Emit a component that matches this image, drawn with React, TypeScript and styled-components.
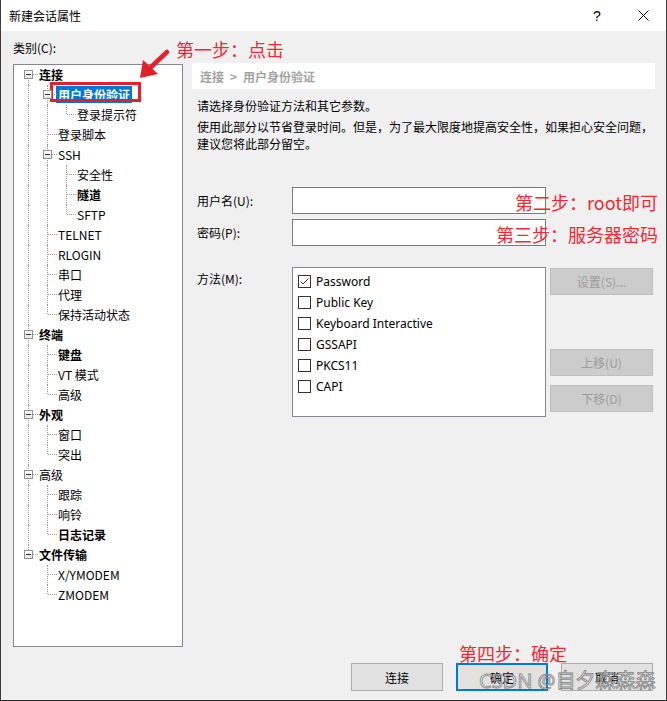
import * as React from "react";
import styled, { createGlobalStyle } from "styled-components";

const GlobalStyle = createGlobalStyle`
  html, body {
    margin: 0;
    padding: 0;
    background: #ffffff;
  }
  body {
    font-family: "Noto Sans", "Noto Sans CJK SC", sans-serif;
    font-size: 12px;
    color: #000;
  }
  * { box-sizing: border-box; }
`;

const RED = "#ee2a35";

const Window = styled.div`
  position: relative;
  width: 667px;
  height: 701px;
  display: flex;
  flex-direction: column;
  background: #f0f0f0;
  border-left: 1px solid #3c3c3c;
  border-right: 1px solid #3c3c3c;
  border-bottom: 1px solid #2a2a2a;
  overflow: hidden;
`;

const TitleBar = styled.div`
  height: 31px;
  flex: none;
  display: flex;
  align-items: center;
  background: #ffffff;
  padding-left: 8px;
`;

const Title = styled.div`
  flex: 1;
  font-size: 12px;
  font-family: "Noto Sans CJK SC", sans-serif;
`;

const CaptionButton = styled.div`
  width: 46px;
  height: 31px;
  display: flex;
  align-items: center;
  justify-content: center;
  font-size: 14px;
  font-family: "Liberation Sans", sans-serif;
`;

const Body = styled.div`
  flex: 1;
  display: flex;
  flex-direction: column;
  padding: 9px 11px 0 11px;
  font-family: "Noto Sans CJK SC", sans-serif;
`;

const Main = styled.div`
  display: flex;
  gap: 9px;
`;

const LeftCol = styled.div`
  width: 171px;
  flex: none;
  display: flex;
  flex-direction: column;
`;

const CaptionLabel = styled.div`
  height: 16px;
  line-height: 16px;
  margin-bottom: 8px;
  padding-left: 1px;
`;

const TreeBox = styled.div`
  margin-left: 1px;
  width: 170px;
  height: 583px;
  background: #ffffff;
  border: 1px solid #828790;
  padding-left: 5px;
`;

const TreeRow = styled.div`
  display: flex;
  align-items: center;
  height: 20px;
`;

const Guide = styled.span<{ $up: boolean; $down: boolean; $branch: boolean }>`
  position: relative;
  flex: none;
  width: 19px;
  height: 20px;
  &::before {
    content: "";
    display: ${(p) => (p.$up || p.$down ? "block" : "none")};
    position: absolute;
    left: 9px;
    top: ${(p) => (p.$up ? "0" : "9px")};
    bottom: ${(p) => (p.$down ? "0" : "11px")};
    border-left: 1px dotted #9a9a9a;
  }
  &::after {
    content: "";
    display: ${(p) => (p.$branch ? "block" : "none")};
    position: absolute;
    left: 10px;
    right: 0;
    top: 9px;
    border-top: 1px dotted #9a9a9a;
  }
`;

const Expander = styled.span`
  position: absolute;
  z-index: 1;
  left: 5px;
  top: 5px;
  width: 9px;
  height: 9px;
  border: 1px solid #919191;
  background: linear-gradient(#ffffff, #e4e4e4);
  &::after {
    content: "";
    position: absolute;
    left: 1px;
    right: 1px;
    top: 3px;
    height: 1px;
    background: #2c3340;
  }
`;

const NodeLabel = styled.span<{ $bold?: boolean; $sel?: boolean }>`
  margin-left: -1px;
  margin-top: -2px;
  padding: 0 2px;
  height: 17px;
  line-height: 17px;
  white-space: nowrap;
  font-weight: ${(p) => (p.$bold ? 700 : 400)};
  background: ${(p) => (p.$sel ? "#0078d7" : "transparent")};
  color: ${(p) => (p.$sel ? "#ffffff" : "#000000")};
`;

const RightCol = styled.div`
  flex: 1;
  padding-top: 23px;
  display: flex;
  flex-direction: column;
`;

const Breadcrumb = styled.div`
  height: 26px;
  display: flex;
  align-items: center;
  gap: 6px;
  padding-left: 8px;
  background: #ffffff;
  color: #a2a2a2;
  font-weight: 700;
`;

const Para = styled.div<{ $gap: number }>`
  margin-top: ${(p) => p.$gap}px;
  padding-left: 5px;
  line-height: 17px;
  white-space: nowrap;
`;

const Form = styled.div`
  margin-top: 35px;
  display: flex;
  flex-direction: column;
`;

const FieldRow = styled.div<{ $gap: number }>`
  display: flex;
  align-items: center;
  margin-top: ${(p) => p.$gap}px;
`;

const FieldLabel = styled.div`
  width: 100px;
  padding-left: 5px;
  flex: none;
`;

const TextBox = styled.div`
  width: 254px;
  height: 27px;
  background: #ffffff;
  border: 1px solid #7a7a7a;
`;

const MethodRow = styled.div`
  display: flex;
  align-items: flex-start;
  margin-top: 21px;
`;

const MethodLabel = styled(FieldLabel)`
  padding-top: 4px;
  line-height: 16px;
`;

const MethodList = styled.div`
  width: 254px;
  height: 150px;
  background: #ffffff;
  border: 1px solid #828790;
  padding: 3px 5px;
`;

const MethodItem = styled.div`
  display: flex;
  align-items: center;
  height: 21px;
  gap: 5px;
  font-family: "Noto Sans", sans-serif;
`;

const Check = styled.span`
  width: 13px;
  height: 13px;
  flex: none;
  border: 1px solid #333333;
  background: #ffffff;
  display: flex;
  align-items: center;
  justify-content: center;
`;

const SideButtons = styled.div`
  margin-left: 4px;
  width: 103px;
  display: flex;
  flex-direction: column;
`;

const DisabledButton = styled.div<{ $gap: number }>`
  margin-top: ${(p) => p.$gap}px;
  height: 27px;
  display: flex;
  align-items: center;
  justify-content: center;
  background: #cccccc;
  border: 1px solid #bfbfbf;
  color: #9c9c9c;
`;

const Footer = styled.div`
  margin-top: 16px;
  display: flex;
  justify-content: flex-end;
  gap: 13px;
  padding-right: 2px;
`;

const PushButton = styled.div<{ $default?: boolean }>`
  width: 92px;
  height: 28px;
  display: flex;
  align-items: center;
  justify-content: center;
  background: #e1e1e1;
  border: ${(p) => (p.$default ? "2px solid #0078d7" : "1px solid #adadad")};
`;

/* annotations drawn over the dialog */
const Note = styled.div<{ $left?: number; $right?: number; $top: number }>`
  position: absolute;
  top: ${(p) => p.$top}px;
  ${(p) => (p.$left !== undefined ? `left: ${p.$left}px;` : "")}
  ${(p) => (p.$right !== undefined ? `right: ${p.$right}px;` : "")}
  font-family: "Noto Sans CJK SC", sans-serif;
  font-size: 18px;
  line-height: 24px;
  color: ${RED};
  white-space: nowrap;
`;

const Highlight = styled.div`
  position: absolute;
  left: 49px;
  top: 82px;
  width: 91px;
  height: 20px;
  border: 3px solid #e3202a;
`;

const Arrow = styled.svg`
  position: absolute;
  left: 130px;
  top: 42px;
`;

const Watermark = styled.div`
  position: absolute;
  left: 478px;
  top: 668px;
  font-family: "Noto Sans", "Noto Sans CJK SC", sans-serif;
  font-size: 20px;
  line-height: 26px;
  color: rgba(235, 235, 235, 0.6);
  -webkit-text-stroke: 0.8px rgba(105, 105, 105, 0.8);
  white-space: nowrap;
`;

type Node = { l: number; t: string; b?: boolean; exp?: boolean; sel?: boolean };

const tree: Node[] = [
  { l: 0, t: "连接", b: true, exp: true },
  { l: 1, t: "用户身份验证", b: true, exp: true, sel: true },
  { l: 2, t: "登录提示符" },
  { l: 1, t: "登录脚本" },
  { l: 1, t: "SSH", exp: true },
  { l: 2, t: "安全性" },
  { l: 2, t: "隧道", b: true },
  { l: 2, t: "SFTP" },
  { l: 1, t: "TELNET" },
  { l: 1, t: "RLOGIN" },
  { l: 1, t: "串口" },
  { l: 1, t: "代理" },
  { l: 1, t: "保持活动状态" },
  { l: 0, t: "终端", b: true, exp: true },
  { l: 1, t: "键盘", b: true },
  { l: 1, t: "VT 模式" },
  { l: 1, t: "高级" },
  { l: 0, t: "外观", b: true, exp: true },
  { l: 1, t: "窗口" },
  { l: 1, t: "突出" },
  { l: 0, t: "高级", exp: true },
  { l: 1, t: "跟踪" },
  { l: 1, t: "响铃" },
  { l: 1, t: "日志记录", b: true },
  { l: 0, t: "文件传输", b: true, exp: true },
  { l: 1, t: "X/YMODEM" },
  { l: 1, t: "ZMODEM" },
];

function hasNextSibling(i: number) {
  for (let j = i + 1; j < tree.length; j++) {
    if (tree[j].l < tree[i].l) return false;
    if (tree[j].l === tree[i].l) return true;
  }
  return false;
}

function ancestorAt(i: number, level: number) {
  for (let j = i - 1; j >= 0; j--) if (tree[j].l === level) return j;
  return -1;
}

function TreeNode({ i }: { i: number }) {
  const n = tree[i];
  const cells = [];
  for (let d = 0; d < n.l; d++) {
    const a = ancestorAt(i, d);
    const cont = a >= 0 && hasNextSibling(a);
    cells.push(<Guide key={d} $up={cont} $down={cont} $branch={false} />);
  }
  cells.push(
    <Guide key="own" $up={i !== 0} $down={hasNextSibling(i)} $branch>
      {n.exp && <Expander />}
    </Guide>
  );
  return (
    <TreeRow>
      {cells}
      <NodeLabel $bold={n.b} $sel={n.sel}>
        {n.t}
      </NodeLabel>
    </TreeRow>
  );
}

const methods = ["Password", "Public Key", "Keyboard Interactive", "GSSAPI", "PKCS11", "CAPI"];

export default function App() {
  return (
    <>
      <GlobalStyle />
      <Window>
        <TitleBar>
          <Title>新建会话属性</Title>
          <CaptionButton>?</CaptionButton>
          <CaptionButton>
            <svg width="11" height="11" viewBox="0 0 11 11">
              <path d="M0.5 0.5 L10.5 10.5 M10.5 0.5 L0.5 10.5" stroke="#000" strokeWidth="1" fill="none" />
            </svg>
          </CaptionButton>
        </TitleBar>
        <Body>
          <Main>
            <LeftCol>
              <CaptionLabel>类别(C):</CaptionLabel>
              <TreeBox>
                {tree.map((_, i) => (
                  <TreeNode key={i} i={i} />
                ))}
              </TreeBox>
            </LeftCol>
            <RightCol>
              <Breadcrumb>
                <span>连接</span>
                <span>&gt;</span>
                <span>用户身份验证</span>
              </Breadcrumb>
              <Para $gap={8}>请选择身份验证方法和其它参数。</Para>
              <Para $gap={4}>
                使用此部分以节省登录时间。但是，为了最大限度地提高安全性，如果担心安全问题，
                <br />
                建议您将此部分留空。
              </Para>
              <Form>
                <FieldRow $gap={0}>
                  <FieldLabel>用户名(U):</FieldLabel>
                  <TextBox />
                </FieldRow>
                <FieldRow $gap={5}>
                  <FieldLabel>密码(P):</FieldLabel>
                  <TextBox />
                </FieldRow>
                <MethodRow>
                  <MethodLabel>方法(M):</MethodLabel>
                  <MethodList>
                    {methods.map((m, i) => (
                      <MethodItem key={m}>
                        <Check>
                          {i === 0 && (
                            <svg width="11" height="11" viewBox="0 0 11 11">
                              <path d="M1.5 5.5 L4 8 L9.5 2.5" stroke="#333" strokeWidth="1" fill="none" />
                            </svg>
                          )}
                        </Check>
                        {m}
                      </MethodItem>
                    ))}
                  </MethodList>
                  <SideButtons>
                    <DisabledButton $gap={1}>设置(S)...</DisabledButton>
                    <DisabledButton $gap={54}>上移(U)</DisabledButton>
                    <DisabledButton $gap={9}>下移(D)</DisabledButton>
                  </SideButtons>
                </MethodRow>
              </Form>
            </RightCol>
          </Main>
          <Footer>
            <PushButton>连接</PushButton>
            <PushButton $default>确定</PushButton>
            <PushButton>取消</PushButton>
          </Footer>
        </Body>

        <Note $left={175} $top={37}>第一步：点击</Note>
        <Note $right={8} $top={190}>第二步：root即可</Note>
        <Note $right={8} $top={222}>第三步：服务器密码</Note>
        <Note $left={458} $top={641}>第四步：确定</Note>
        <Highlight />
        <Arrow width="40" height="40" viewBox="0 0 40 40">
          <path d="M36 10 L19 26" stroke="#e3202a" strokeWidth="4.5" strokeLinecap="round" fill="none" />
          <path d="M9 36 L12 18 L27 32 Z" fill="#e3202a" />
        </Arrow>
        <Watermark>CSDN @自夕森森森</Watermark>
      </Window>
    </>
  );
}
